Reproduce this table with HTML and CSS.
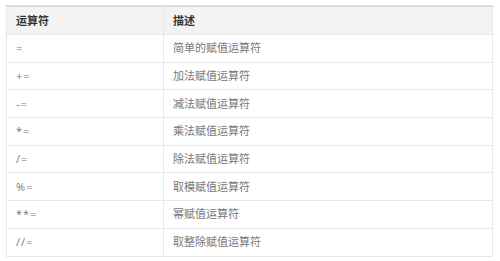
FILE: index.html
```html
<!DOCTYPE html>
<html>
<head>
<meta charset="utf-8">
<link rel="stylesheet" href="styles.css">
</head>
<body>
<table class="ops">
  <thead>
    <tr><th class="c1">运算符</th><th>描述</th></tr>
  </thead>
  <tbody>
    <tr><td>=</td><td>简单的赋值运算符</td></tr>
    <tr><td>+=</td><td>加法赋值运算符</td></tr>
    <tr><td>-=</td><td>减法赋值运算符</td></tr>
    <tr><td>*=</td><td>乘法赋值运算符</td></tr>
    <tr><td>/=</td><td>除法赋值运算符</td></tr>
    <tr><td>%=</td><td>取模赋值运算符</td></tr>
    <tr><td>**=</td><td>幂赋值运算符</td></tr>
    <tr><td>//=</td><td>取整除赋值运算符</td></tr>
  </tbody>
</table>
</body>
</html>
```
FILE: styles.css
```css
html, body {
  margin: 0;
  padding: 0;
  background: #fff;
}
body {
  padding: 5px 7px 0 6px;
  font-family: "Open Sans", "Noto Sans CJK SC", sans-serif;
  font-size: 11px;
  color: #777;
}
.ops {
  width: 487px;
  border-collapse: collapse;
  border-top: 2px solid #dcdcdc;
}
.ops th, .ops td {
  border: 1px solid #e8e8e8;
  text-align: left;
  padding: 0 9px;
  height: 26.7px;
  line-height: 16px;
}
.ops td:first-child {
  letter-spacing: 1px;
}
.ops th {
  background: #f3f3f3;
  color: #333;
  font-weight: bold;
  height: 27px;
}
.ops .c1 {
  width: 138px;
}
```
